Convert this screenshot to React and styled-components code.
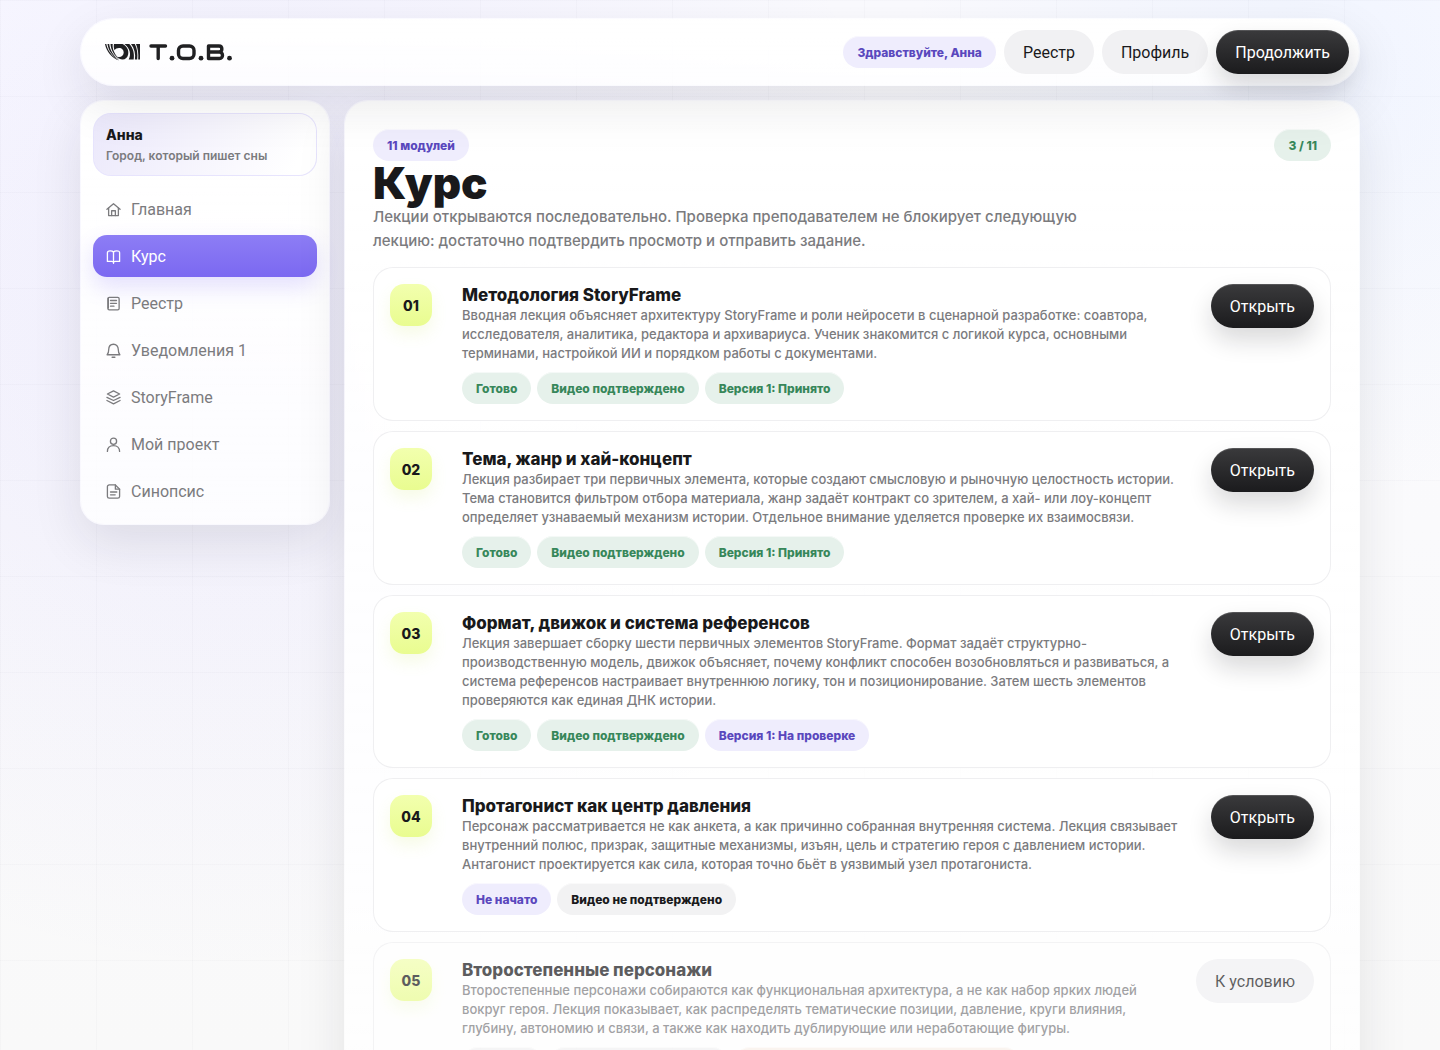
import styled, { createGlobalStyle, css } from "styled-components";

const navItems = [
  { label: "Главная", icon: "home" },
  { label: "Курс", icon: "book", active: true },
  { label: "Реестр", icon: "registry" },
  { label: "Уведомления 1", icon: "bell" },
  { label: "StoryFrame", icon: "layers" },
  { label: "Мой проект", icon: "user" },
  { label: "Синопсис", icon: "file" },
];

const modules = [
  {
    number: "01",
    title: "Методология StoryFrame",
    text: "Вводная лекция объясняет архитектуру StoryFrame и роли нейросети в сценарной разработке: соавтора, исследователя, аналитика, редактора и архивариуса. Ученик знакомится с логикой курса, основными терминами, настройкой ИИ и порядком работы с документами.",
    tags: [
      ["Готово", "green"],
      ["Видео подтверждено", "green"],
      ["Версия 1: Принято", "green"],
    ],
  },
  {
    number: "02",
    title: "Тема, жанр и хай-концепт",
    text: "Лекция разбирает три первичных элемента, которые создают смысловую и рыночную целостность истории. Тема становится фильтром отбора материала, жанр задаёт контракт со зрителем, а хай- или лоу-концепт определяет узнаваемый механизм истории. Отдельное внимание уделяется проверке их взаимосвязи.",
    tags: [
      ["Готово", "green"],
      ["Видео подтверждено", "green"],
      ["Версия 1: Принято", "green"],
    ],
  },
  {
    number: "03",
    title: "Формат, движок и система референсов",
    text: "Лекция завершает сборку шести первичных элементов StoryFrame. Формат задаёт структурно-производственную модель, движок объясняет, почему конфликт способен возобновляться и развиваться, а система референсов настраивает внутреннюю логику, тон и позиционирование. Затем шесть элементов проверяются как единая ДНК истории.",
    tags: [
      ["Готово", "green"],
      ["Видео подтверждено", "green"],
      ["Версия 1: На проверке", "violet"],
    ],
  },
  {
    number: "04",
    title: "Протагонист как центр давления",
    text: "Персонаж рассматривается не как анкета, а как причинно собранная внутренняя система. Лекция связывает внутренний полюс, призрак, защитные механизмы, изъян, цель и стратегию героя с давлением истории. Антагонист проектируется как сила, которая точно бьёт в уязвимый узел протагониста.",
    tags: [
      ["Не начато", "violet"],
      ["Видео не подтверждено", "gray"],
    ],
  },
  {
    number: "05",
    title: "Второстепенные персонажи",
    text: "Второстепенные персонажи собираются как функциональная архитектура, а не как набор ярких людей вокруг героя. Лекция показывает, как распределять тематические позиции, давление, круги влияния, глубину, автономию и связи, а также как находить дублирующие или неработающие фигуры.",
    tags: [
      ["Закрыто", "gray"],
      ["Видео не подтверждено", "gray"],
      ["Сначала завершите и отправьте модуль 4", "orange"],
    ],
    locked: true,
  },
];

const iconShapes = {
  home: (
    <>
      <path d="M1 7.8 8 1.8l7 6" />
      <path d="M2.8 6.5v8h10.4v-8" />
      <path d="M6 14.5V9.300h4v5.200" />
    </>
  ),
  book: (
    <>
      <path d="M8 3.200C7.200 2.300 6 2 4.500 2 2.500 2 1.500 2.600 1.500 4v9.200h4.700c1 0 1.800.3 1.800 1 0-.7.800-1 1.800-1h4.700V4c0-1.400-1-2-3-2C10 2 8.800 2.300 8 3.200z" />
      <path d="M8 3.200v12" />
    </>
  ),
  registry: (
    <>
      <rect x="2" y="1.500" width="12" height="13.300" rx="1.500" />
      <path d="M4.800 4.800h6.400M4.800 7.800h6.400M4.800 10.800h3.700M2.500 12.800V2.500" />
    </>
  ),
  bell: (
    <>
      <path d="M1.200 12.500h13.600c-1.200-1.200-1.700-2.800-1.700-5.500 0-3.300-2-5.700-5.100-5.700S2.900 3.700 2.900 7c0 2.700-.5 4.300-1.700 5.500z" />
      <path d="M6.500 15.200h3" />
    </>
  ),
  layers: (
    <>
      <path d="m8 1 6.500 3.300L8 7.600 1.500 4.300z" />
      <path d="m1 7.800 7 3.400 7-3.400" />
      <path d="m1 11.200 7 3.600 7-3.600" />
    </>
  ),
  user: (
    <>
      <circle cx="8" cy="4.500" r="3.300" />
      <path d="M1.500 15.500c0-4 2.500-6.300 6.500-6.300s6.500 2.300 6.500 6.300" />
    </>
  ),
  file: (
    <>
      <path d="M10 1H3.500C2.300 1 1.500 1.700 1.500 2.800v10.400c0 1.100.8 1.800 2 1.800h9c1.200 0 2-.7 2-1.800V5.500z" />
      <path d="M10 1v4.500h4.500M4.800 8.500h6.700M4.800 11.500h5" />
    </>
  ),
};

const NavIcon = ({ name }) => (
  <IconSvg viewBox="0 0 16 16" aria-hidden="true">
    {iconShapes[name]}
  </IconSvg>
);

const Logo = () => (
  <LogoSvg viewBox="0 0 128 18" role="img" aria-label="T.O.B.">
    <g fill="#202022">
      <path d="M0 1h1.300C2.500 7 6.500 13 14 17.500 7 15 1.500 9 0 1z" />
      <path d="M2.500 1h1.700c.5 5.500 4 11.500 10 16C7 13 3.200 7 2.500 1z" />
      <path d="M5.500 1h2.200c-.6 4.500 1.500 10 6.500 15C8.500 12 5.800 6.500 5.500 1z" />
      <path d="M9 1h8.500c4.200 1.800 6.500 6 5.700 10.200-.6 3.200-2.700 5.300-5.700 5.300-2.300 0-4-1-5-2.700 3.200 1 6-.8 6.200-4 .2-2.800-1.800-4.900-4.700-4.900-2 0-3.500.9-4.500 2.300C8.700 5 8.600 3 9 1z" />
      <path d="M19.500 1h4.800c4 4 5.300 9.800 4.400 15.500h-5C26.500 11.500 25 5.500 19.500 1z" />
      <path d="M26 1h3.800c2.500 4.500 3 10 2.400 15.500h-2.300C30.800 11 29.500 5.500 26 1z" />
      <path d="M31 1h4v15.500h-1.800C33.700 11 33 6 31 1z" />
    </g>
    <g fill="none" stroke="#202022" strokeWidth="3.400" strokeLinecap="round" strokeLinejoin="round">
      <path d="M46 3h14.500M53.200 3v12.500" />
      <rect x="73.500" y="3" width="15.500" height="12.500" rx="4.500" />
      <path d="M103.500 3h10.500c3.800 0 3.800 6 0 6h-10.500H114.500c4 0 4 6.500 0 6.500h-11z" />
    </g>
    <g fill="#202022">
      <circle cx="67" cy="15.200" r="2.400" />
      <circle cx="96" cy="15.200" r="2.400" />
      <circle cx="124.500" cy="15.200" r="2.400" />
    </g>
  </LogoSvg>
);

const ModuleCard = ({ number, title, text, tags, locked }) => (
  <Card $locked={locked}>
    <Number>{number}</Number>
    <div>
      <CardTitle>{title}</CardTitle>
      <CardText>{text}</CardText>
      <Tags>
        {tags.map(([label, tone]) => (
          <Pill key={label} $tone={tone}>
            {label}
          </Pill>
        ))}
      </Tags>
    </div>
    <Button $dark={!locked}>{locked ? "К условию" : "Открыть"}</Button>
  </Card>
);

const App = () => {
  return (
    <>
      <GlobalStyle />
      <Page>
        <TopBar>
          <LogoLink href="#">
            <Logo />
          </LogoLink>
          <Actions>
            <Pill $tone="violet">Здравствуйте, Анна</Pill>
            <Button>Реестр</Button>
            <Button>Профиль</Button>
            <Button $dark>Продолжить</Button>
          </Actions>
        </TopBar>
        <Columns>
          <Sidebar>
            <Profile>
              <ProfileName>Анна</ProfileName>
              <ProfileText>Город, который пишет сны</ProfileText>
            </Profile>
            <Nav>
              {navItems.map(({ label, icon, active }) => (
                <NavLink key={label} href="#" $active={active}>
                  <NavIcon name={icon} />
                  {label}
                </NavLink>
              ))}
            </Nav>
          </Sidebar>
          <Main>
            <Heading>
              <div>
                <Pill $tone="violet">11 модулей</Pill>
                <Title>Курс</Title>
                <Lead>
                  Лекции открываются последовательно. Проверка преподавателем не
                  блокирует следующую лекцию: достаточно подтвердить просмотр и
                  отправить задание.
                </Lead>
              </div>
              <Pill $tone="green">3 / 11</Pill>
            </Heading>
            <List>
              {modules.map((module) => (
                <ModuleCard key={module.number} {...module} />
              ))}
            </List>
          </Main>
        </Columns>
      </Page>
    </>
  );
};

const GlobalStyle = createGlobalStyle`
  * {
    box-sizing: border-box;
  }

  html {
    height: 100%;
    overflow: hidden;
  }

  body {
    margin: 0;
    height: 100%;
    overflow: hidden;
    color: #19191b;
    font-family: Inter, "Liberation Sans", sans-serif;
    background:
      linear-gradient(rgba(30, 30, 60, 0.02) 1px, transparent 1px) 0 0 / 96px 96px,
      linear-gradient(90deg, rgba(30, 30, 60, 0.02) 1px, transparent 1px) 0 0 / 96px 96px,
      radial-gradient(circle at 16% 28%, rgba(124, 104, 245, 0.09), transparent 680px),
      radial-gradient(circle at 92% 8%, rgba(120, 170, 255, 0.08), transparent 420px),
      linear-gradient(#fbfbff, #f9f9f9);
  }

  h1, h2, p {
    margin: 0;
  }
`;

const tones = {
  violet: { color: "#5a48bd", background: "#efedfd" },
  green: { color: "#37875a", background: "#e6f1eb" },
  gray: { color: "#19191b", background: "#f2f2f3" },
  orange: { color: "#a9642d", background: "#f9f1ea" },
};

const surface = css`
  border: 1px solid rgba(255, 255, 255, 0.5);
  background: linear-gradient(#fff, rgba(255, 255, 255, 0.8));
  background-clip: padding-box;
  box-shadow: 0 18px 50px rgba(30, 30, 40, 0.1);
`;

const Page = styled.div`
  width: calc(100% - 32px);
  max-width: 1280px;
  margin: 0 auto;
  padding: 18px 0;
`;

const TopBar = styled.header`
  ${surface}
  position: relative;
  display: flex;
  align-items: center;
  justify-content: space-between;
  height: 68px;
  padding: 0 10px 0 24px;
  border-radius: 34px;
`;

const LogoLink = styled.a`
  display: flex;
`;

const LogoSvg = styled.svg`
  width: 128px;
  height: 18px;
`;

const Actions = styled.div`
  display: flex;
  align-items: center;
  gap: 8px;
`;

const Pill = styled.span`
  display: inline-flex;
  align-items: center;
  height: 32px;
  padding: 0 14px;
  border-radius: 16px;
  font-size: 12px;
  font-weight: 800;
  white-space: nowrap;
  color: ${({ $tone }) => tones[$tone].color};
  background: ${({ $tone }) => tones[$tone].background};
  box-shadow: inset 0 1px 0 rgba(255, 255, 255, 0.6);
`;

const Button = styled.button`
  height: 44px;
  padding: 0 19px;
  border: 0;
  border-radius: 22px;
  font-family: Roboto, Inter, sans-serif;
  font-size: 16px;
  white-space: nowrap;
  color: #19191b;
  background: #f1f1f3;
  cursor: pointer;

  ${({ $dark }) =>
    $dark &&
    css`
      color: #fff;
      background: linear-gradient(#3a3a3c, #1b1b1d);
      box-shadow: 0 12px 24px rgba(20, 20, 25, 0.16),
        inset 0 1px 0 rgba(255, 255, 255, 0.14);
    `}
`;

const Columns = styled.div`
  display: grid;
  grid-template-columns: 250px minmax(0, 1fr);
  align-items: start;
  gap: 14px;
  margin-top: 14px;
`;

const Sidebar = styled.aside`
  ${surface}
  padding: 12px;
  border-radius: 24px;
`;

const Profile = styled.div`
  display: flex;
  flex-direction: column;
  gap: 4px;
  padding: 12px;
  border: 1px solid rgba(124, 104, 245, 0.18);
  border-radius: 18px;
  background: linear-gradient(120deg, #ebe8fb, #fff 90%);
  background-clip: padding-box;
`;

const ProfileName = styled.strong`
  font-size: 14px;
  line-height: 18px;
  font-weight: 800;
`;

const ProfileText = styled.span`
  font-size: 12px;
  line-height: 15px;
  font-weight: 600;
  color: #7b7b7e;
`;

const Nav = styled.nav`
  display: flex;
  flex-direction: column;
  gap: 5px;
  margin-top: 12px;
`;

const NavLink = styled.a`
  display: flex;
  align-items: center;
  gap: 10px;
  height: 42px;
  padding: 0 13px;
  border-radius: 14px;
  font-family: Roboto, Inter, sans-serif;
  font-size: 16px;
  text-decoration: none;
  color: #7b7b7e;

  ${({ $active }) =>
    $active &&
    css`
      color: #fff;
      background: linear-gradient(#8d7df5, #7b68f1);
      box-shadow: 0 10px 22px rgba(124, 104, 245, 0.2);
    `}
`;

const IconSvg = styled.svg`
  width: 15px;
  height: 15px;
  fill: none;
  stroke: currentColor;
  stroke-width: 1.4;
  stroke-linecap: round;
  stroke-linejoin: round;
`;

const Main = styled.main`
  ${surface}
  padding: 28px;
  border-radius: 24px;
`;

const Heading = styled.div`
  display: flex;
  align-items: flex-start;
  justify-content: space-between;
`;

const Title = styled.h1`
  font-size: 44px;
  line-height: 44px;
  font-weight: 900;
`;

const Lead = styled.p`
  max-width: 720px;
  font-size: 15px;
  line-height: 24px;
  font-weight: 500;
  color: #7b7b7e;
`;

const List = styled.div`
  display: grid;
  gap: 10px;
  margin-top: 14px;
`;

const Card = styled.article`
  display: grid;
  grid-template-columns: 58px minmax(0, 1fr) auto;
  align-items: start;
  gap: 14px;
  padding: 16px;
  border: 1px solid rgba(30, 30, 60, 0.07);
  border-radius: 20px;
  background: rgba(255, 255, 255, 0.8);
  opacity: ${({ $locked }) => ($locked ? 0.7 : 1)};
`;

const Number = styled.span`
  display: flex;
  align-items: center;
  justify-content: center;
  width: 42px;
  height: 42px;
  border-radius: 14px;
  font-size: 14px;
  font-weight: 800;
  background: linear-gradient(#f2ffae, #e9fc90);
  box-shadow: 0 8px 16px rgba(200, 230, 80, 0.14);
`;

const CardTitle = styled.h2`
  font-size: 17px;
  line-height: 22px;
  font-weight: 800;
`;

const CardText = styled.p`
  font-size: 13px;
  line-height: 19px;
  font-weight: 500;
  color: #7b7b7e;
`;

const Tags = styled.div`
  display: flex;
  flex-wrap: wrap;
  gap: 6px;
  margin-top: 9px;
`;

export default App;
